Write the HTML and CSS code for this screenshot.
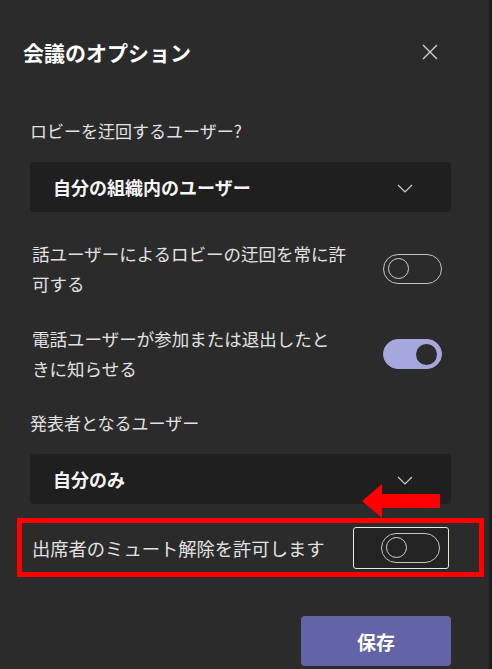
FILE: index.html
```html
<!DOCTYPE html>
<html lang="ja">
<head>
  <meta charset="UTF-8">
  <title>会議のオプション</title>
  <link rel="stylesheet" href="styles.css">
</head>
<body>

  <div class="panel">
    <div class="header">
      <h1 class="title">会議のオプション</h1>
      <button class="close" aria-label="閉じる">
        <svg width="16" height="16" viewBox="0 0 16 16">
          <path d="M1 1 L15 15 M15 1 L1 15" stroke="#d0d0d0" stroke-width="1.4" fill="none"/>
        </svg>
      </button>
    </div>

    <p class="label">ロビーを迂回するユーザー?</p>
    <div class="select">
      <span>自分の組織内のユーザー</span>
      <svg class="chevron" width="16" height="9" viewBox="0 0 16 9">
        <path d="M1 1 L8 8 L15 1" stroke="#cfcfcf" stroke-width="1.2" fill="none"/>
      </svg>
    </div>

    <div class="row">
      <p class="row-text">話ユーザーによるロビーの迂回を常に許<br>可する</p>
      <div class="toggle"><span class="knob"></span></div>
    </div>

    <div class="row">
      <p class="row-text">電話ユーザーが参加または退出したと<br>きに知らせる</p>
      <div class="toggle on"><span class="knob"></span></div>
    </div>

    <p class="label second">発表者となるユーザー</p>
    <div class="select">
      <span>自分のみ</span>
      <svg class="chevron" width="16" height="9" viewBox="0 0 16 9">
        <path d="M1 1 L8 8 L15 1" stroke="#cfcfcf" stroke-width="1.2" fill="none"/>
      </svg>
    </div>

    <div class="highlight">
      <p class="row-text big">出席者のミュート解除を許可します</p>
      <div class="focus-ring">
        <div class="toggle"><span class="knob"></span></div>
      </div>
      <!-- 注釈の矢印 -->
      <svg class="arrow" width="80" height="34" viewBox="0 0 80 34">
        <polygon points="0,17 20,0 20,10 78,10 78,24 20,24 20,34" fill="#ff0000"/>
      </svg>
    </div>

    <div class="footer">
      <button class="btn">保存</button>
    </div>
  </div>

</body>
</html>
```

FILE: styles.css
```css
body {
  margin: 0;
  padding: 0;
  background: #2b2b2b;
  font-family: "Noto Sans CJK JP", "Noto Sans", sans-serif;
  color: #e2e2e2;
}

.panel {
  width: 489px;
  height: 669px;
  border-right: 3px solid #1c1c1c;
  background: #2b2b2b;
  overflow: hidden;
}

.header {
  display: flex;
  align-items: center;
  justify-content: space-between;
  padding: 37px 51px 0 23px;
  height: 30px;
}

.title {
  margin: 0;
  font-size: 21px;
  font-weight: 700;
  color: #ffffff;
  line-height: 30px;
}

.close {
  background: none;
  border: none;
  padding: 0;
  width: 16px;
  height: 16px;
  display: flex;
}

.label {
  margin: 49px 0 0 30px;
  font-size: 17px;
  line-height: 30px;
}

.label.second {
  margin-top: 24px;
}

.select {
  margin: 16px 38px 0 30px;
  height: 50px;
  background: #1f1f1f;
  border-radius: 4px;
  display: flex;
  align-items: center;
  justify-content: space-between;
  padding: 0 38px 0 23px;
  font-size: 18px;
  font-weight: 700;
  color: #f4f4f4;
}

.chevron {
  margin-top: 2px;
}

.row {
  display: flex;
  align-items: center;
  justify-content: space-between;
  margin: 27px 47px 0 32px;
}

.row + .row {
  margin-top: 25px;
}

.row-text {
  margin: 0;
  font-size: 17.5px;
  line-height: 30px;
}

.row-text.big {
  font-size: 18.3px;
}

.toggle {
  width: 57px;
  height: 28px;
  border: 1.5px solid #c4c4c4;
  border-radius: 16px;
  position: relative;
  box-sizing: content-box;
}

.knob {
  position: absolute;
  left: 4px;
  top: 3px;
  width: 19px;
  height: 19px;
  border: 1.5px solid #cfcfcf;
  border-radius: 50%;
}

.toggle.on {
  background: #a6a7dc;
  border-color: #a6a7dc;
}

.toggle.on .knob {
  left: auto;
  right: 4px;
  width: 21px;
  height: 21px;
  top: 3.5px;
  border: none;
  background: #2b2b2b;
}

.highlight {
  position: relative;
  margin: 14px 5px 0 17px;
  height: 49px;
  border: 5px solid #ff0000;
  display: flex;
  align-items: center;
  justify-content: space-between;
  padding: 0 30px 0 10px;
}

.focus-ring {
  width: 86px;
  height: 40px;
  border: 1.5px solid #e8e8e8;
  border-radius: 3px;
  background: #232323;
  display: flex;
  align-items: center;
  justify-content: flex-end;
  padding-right: 8px;
}

.arrow {
  position: absolute;
  left: 340px;
  top: -39px;
}

.footer {
  display: flex;
  justify-content: flex-end;
  padding: 39px 38px 0 0;
}

.btn {
  width: 150px;
  height: 50px;
  background: #6264a7;
  color: #ffffff;
  border: none;
  border-radius: 4px;
  font-family: "Noto Sans CJK JP", sans-serif;
  font-size: 19px;
  font-weight: 700;
}
```
